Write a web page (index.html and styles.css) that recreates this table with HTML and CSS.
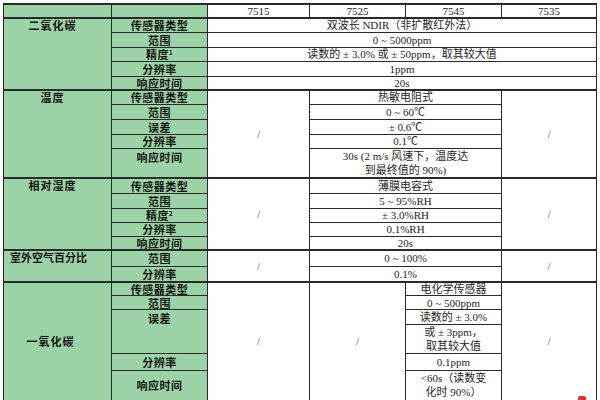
FILE: index.html
```html
<!DOCTYPE html>
<html lang="zh">
<head>
<meta charset="utf-8">
<link rel="stylesheet" href="styles.css">
</head>
<body>
<div class="page">
<table class="spec">
  <colgroup>
    <col class="c1"><col class="c2"><col class="c3"><col class="c4"><col class="c5"><col class="c6">
  </colgroup>
  <tbody>
    <tr class="h14 grp"><td class="g"></td><td class="g"></td><td>7515</td><td>7525</td><td>7545</td><td>7535</td></tr>

    <tr class="h14 grp"><td class="g cat" rowspan="5">二氧化碳</td><td class="g lab">传感器类型</td><td colspan="4">双波长 NDIR（非扩散红外法）</td></tr>
    <tr class="h15"><td class="g lab">范围</td><td colspan="4">0 ~ 5000ppm</td></tr>
    <tr class="h14"><td class="g lab">精度<sup>1</sup></td><td colspan="4">读数的 ± 3.0% 或 ± 50ppm，取其较大值</td></tr>
    <tr class="h15"><td class="g lab">分辨率</td><td colspan="4">1ppm</td></tr>
    <tr class="h14"><td class="g lab">响应时间</td><td colspan="4">20s</td></tr>

    <tr class="h14 grp"><td class="g cat" rowspan="5">温度</td><td class="g lab">传感器类型</td><td class="slash" rowspan="5">/</td><td colspan="2">热敏电阻式</td><td class="slash" rowspan="5">/</td></tr>
    <tr class="h15"><td class="g lab">范围</td><td colspan="2">0 ~ 60℃</td></tr>
    <tr class="h15"><td class="g lab">误差</td><td colspan="2">± 0.6℃</td></tr>
    <tr class="h14"><td class="g lab">分辨率</td><td colspan="2">0.1℃</td></tr>
    <tr class="h30"><td class="g lab top">响应时间</td><td colspan="2" class="two">30s (2 m/s 风速下，温度达<br>到最终值的 90%)</td></tr>

    <tr class="h15 grp"><td class="g cat" rowspan="5">相对湿度</td><td class="g lab">传感器类型</td><td class="slash" rowspan="5">/</td><td colspan="2">薄膜电容式</td><td class="slash" rowspan="5">/</td></tr>
    <tr class="h15"><td class="g lab">范围</td><td colspan="2">5 ~ 95%RH</td></tr>
    <tr class="h14"><td class="g lab">精度<sup>2</sup></td><td colspan="2">± 3.0%RH</td></tr>
    <tr class="h14"><td class="g lab">分辨率</td><td colspan="2">0.1%RH</td></tr>
    <tr class="h14"><td class="g lab">响应时间</td><td colspan="2">20s</td></tr>

    <tr class="h16 grp"><td class="g cat left" rowspan="2">室外空气百分比</td><td class="g lab">范围</td><td class="slash" rowspan="2">/</td><td colspan="2">0 ~ 100%</td><td class="slash" rowspan="2">/</td></tr>
    <tr class="h16"><td class="g lab">分辨率</td><td colspan="2">0.1%</td></tr>

    <tr class="h13 grp"><td class="g cat mid" rowspan="6">一氧化碳</td><td class="g lab">传感器类型</td><td class="slash" rowspan="6">/</td><td class="slash" rowspan="6">/</td><td>电化学传感器</td><td class="slash" rowspan="6">/</td></tr>
    <tr class="h14"><td class="g lab">范围</td><td>0 ~ 500ppm</td></tr>
    <tr class="h15"><td class="g lab top" rowspan="2">误差</td><td>读数的 ± 3.0%</td></tr>
    <tr class="h27"><td class="two">或 ± 3ppm，<br>取其较大值</td></tr>
    <tr class="h17"><td class="g lab">分辨率</td><td>0.1ppm</td></tr>
    <tr class="h30"><td class="g lab">响应时间</td><td class="two">&lt;60s（读数变<br>化时 90%）</td></tr>

    <tr class="h20 grp"><td colspan="2" class="tail">甲醛传感</td><td></td><td></td><td></td><td></td></tr>
  </tbody>
</table>
<span class="mark"></span>
</div>
</body>
</html>
```

FILE: styles.css
```css
html, body {
  margin: 0;
  padding: 0;
  background: #ffffff;
}
body {
  width: 600px;
  height: 400px;
  overflow: hidden;
  font-family: "Liberation Serif", "Noto Sans CJK SC", serif;
  color: #1e1e1e;
}
.page {
  position: relative;
  width: 600px;
  height: 400px;
  padding: 3px 0 0 3px;
  box-sizing: border-box;
  overflow: hidden;
}
.spec {
  border-collapse: collapse;
  table-layout: fixed;
  width: 593px;
  font-size: 11px;
}
.c1 { width: 108px; }
.c2 { width: 96px; }
.c3 { width: 102px; }
.c4 { width: 96px; }
.c5 { width: 96px; }
.c6 { width: 95px; }
.spec td {
  border: 1px solid #2a2a2a;
  padding: 0;
  text-align: center;
  vertical-align: middle;
  line-height: 12px;
  white-space: nowrap;
  overflow: hidden;
}
.spec tr.grp > td { border-top: 2px solid #2a2a2a; }
.h13 { height: 13px; }
.h14 { height: 14px; }
.h15 { height: 15px; }
.h16 { height: 16px; }
.h17 { height: 17px; }
.h20 { height: 20px; }
.h27 { height: 27px; }
.h30 { height: 30px; }
.spec td.g {
  background: #9bd2a6;
  font-family: "Noto Sans CJK SC", sans-serif;
  font-weight: 700;
  color: #151515;
  letter-spacing: 0.5px;
}
.spec td.cat {
  vertical-align: top;
  padding-right: 10px;
  letter-spacing: 1px;
}
.spec td.cat.left {
  text-align: left;
  padding: 0 0 0 6px;
  letter-spacing: 0;
}
.spec td.cat.mid { vertical-align: middle; padding-right: 14px; }
.spec td.top { vertical-align: top; padding-top: 2px; }
.spec td.two { line-height: 14px; }
.spec td.slash { color: #444; }
.spec sup {
  font-size: 6px;
  line-height: 0;
  vertical-align: 4px;
}
.spec td.tail {
  vertical-align: top;
  padding-top: 2px;
  font-family: "Noto Sans CJK SC", sans-serif;
  font-weight: 700;
}
.mark {
  position: absolute;
  left: 578px;
  top: 396px;
  width: 8px;
  height: 4px;
  background: #d8362a;
  border-radius: 2px 2px 0 0;
}
```
